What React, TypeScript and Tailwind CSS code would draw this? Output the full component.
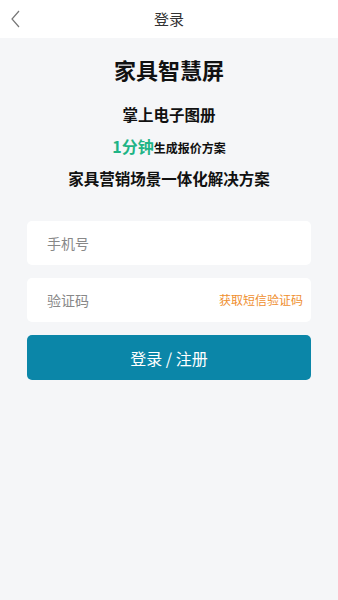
import { useState } from "react";

const font = { fontFamily: '"Noto Sans CJK SC", "Noto Sans", sans-serif' };

export default function App() {
  const [phone, setPhone] = useState("");
  const [code, setCode] = useState("");

  return (
    <div className="w-full min-h-[600px] bg-[#f5f6f8] flex flex-col" style={font}>
      <div className="h-[38px] bg-white flex items-center relative">
        <button className="absolute left-[9px] top-[9px] p-0" aria-label="返回">
          <svg width="14" height="20" viewBox="0 0 14 20" fill="none">
            <path d="M10 2 L3 10 L10 18" stroke="#777" strokeWidth="1.2" />
          </svg>
        </button>
        <h1 className="flex-1 text-center text-[15px] text-[#333]">登录</h1>
      </div>

      <div className="flex flex-col items-center px-[27px]">
        <h2 className="mt-[16px] leading-[30px] text-[22px] font-bold text-[#111]">
          家具智慧屏
        </h2>
        <p className="mt-[19px] leading-[22px] text-[15.5px] font-bold text-[#111]">
          掌上电子图册
        </p>
        <p className="mt-[10px] h-[22px] leading-[22px] font-bold text-[#111] flex items-baseline">
          <span className="text-[16px] text-[#1fb486]">1分钟</span>
          <span className="text-[12px]">生成报价方案</span>
        </p>
        <p className="mt-[10px] leading-[22px] text-[15.5px] font-bold text-[#111]">
          家具营销场景一体化解决方案
        </p>

        <div className="mt-[32px] w-full h-[44px] bg-white rounded-[5px] flex items-center px-[20px]">
          <input
            value={phone}
            onChange={(e) => setPhone(e.target.value)}
            placeholder="手机号"
            className="flex-1 min-w-0 outline-none text-[14px] text-[#333] placeholder:text-[#888] bg-transparent"
          />
        </div>
        <div className="mt-[13px] w-full h-[44px] bg-white rounded-[5px] flex items-center pl-[20px] pr-[8px]">
          <input
            value={code}
            onChange={(e) => setCode(e.target.value)}
            placeholder="验证码"
            className="flex-1 min-w-0 outline-none text-[14px] text-[#333] placeholder:text-[#888] bg-transparent"
          />
          <button className="text-[12px] text-[#ef8f2f] whitespace-nowrap">获取短信验证码</button>
        </div>

        <button className="mt-[13px] w-full h-[45px] rounded-[5px] bg-[#0b86a8] text-white text-[16px]">
          登录 / 注册
        </button>
      </div>
    </div>
  );
}
